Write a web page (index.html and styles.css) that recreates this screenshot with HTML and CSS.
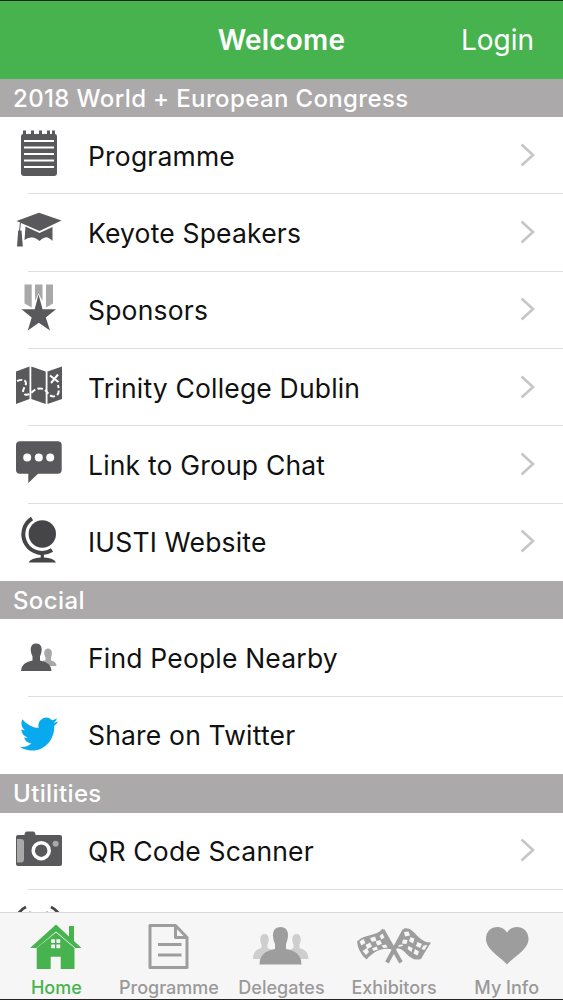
FILE: index.html
```
<!DOCTYPE html>
<html lang="en">
<head>
<meta charset="UTF-8">
<meta name="viewport" content="width=device-width, initial-scale=1.0">
<title>Welcome</title>
<link rel="stylesheet" href="styles.css">
</head>
<body>
  <div class="app">
    <div class="header">
      <h1>Welcome</h1>
      <a class="login">Login</a>
    </div>
    <div class="content">
      <h2>2018 World + European Congress</h2>
      <div class="item">
        <svg class="icon" viewBox="0 0 48 52">
          <path d="M8 4V0.500h3V4h5V0.500h3V4h5V0.500h3V4h5V0.500h3V4h2V0.500h3V4Q42 4 42 7V43Q42 46 39 46H9Q6 46 6 43V7Q6 4 8 4z"/>
          <path class="line" d="M9 11H39M9 17.500H39M9 24H39M9 30.500H39M9 37H39"/>
        </svg>
        <span class="name">Programme</span>
        <svg class="chevron" viewBox="0 0 15 24"><path d="M1.500 1.500L13 12L1.500 22.500"/></svg>
      </div>
      <div class="item">
        <svg class="icon" viewBox="0 0 48 52">
          <path d="M1.500 14L24 5.800L46.500 13.500L24.500 24z"/>
          <path d="M10.500 19.500L24.500 26L37.500 20V34Q33 29.500 30 30.500Q27 31 24.500 34Q20 30 17 30.500Q13 30 9.500 33z"/>
          <path class="thin" d="M5.500 15.500L4.500 24"/>
          <path d="M3.200 23.500H6.500L7.800 39.500H2z"/>
        </svg>
        <span class="name">Keyote Speakers</span>
        <svg class="chevron" viewBox="0 0 15 24"><path d="M1.500 1.500L13 12L1.500 22.500"/></svg>
      </div>
      <div class="item">
        <svg class="icon" viewBox="0 0 48 52">
          <path class="light" d="M9.500 0.500H16.700V23.500L9.500 19.500zM20 0.500H27.500V17L23.500 9.500L20 17zM31 0.500H38V19.500L31 23.500z"/>
          <path d="M23.500 10.500L27.600 25.300H41L30.800 33.600L35 46.500L23.800 38.800L12.800 46.500L16.700 33.600L6.500 25.300H19.700z"/>
        </svg>
        <span class="name">Sponsors</span>
        <svg class="chevron" viewBox="0 0 15 24"><path d="M1.500 1.500L13 12L1.500 22.500"/></svg>
      </div>
      <div class="item">
        <svg class="icon" viewBox="0 0 48 52">
          <path d="M1 9.500L14.500 4.500V37L1 42zM16.300 4.500L30.700 9.500V42L16.300 37zM32.500 9.500L47 4.500V37L32.500 42z"/>
          <path class="route" d="M2 19Q10 16 11 21C11 25 5 29 10 32.500C17 34 17 26.500 25 26.500C33 26.500 32 34 38 34.500Q46 34 43 23"/>
          <path class="cross" d="M35 13.500L43.500 20M43 12.500L36 21"/>
        </svg>
        <span class="name">Trinity College Dublin</span>
        <svg class="chevron" viewBox="0 0 15 24"><path d="M1.500 1.500L13 12L1.500 22.500"/></svg>
      </div>
      <div class="item">
        <svg class="icon" viewBox="0 0 48 52">
          <path d="M5 2.200H42.700Q46.700 2.200 46.700 6.200V30.700Q46.700 34.700 42.700 34.700H23L13.300 44V34.700H5Q1 34.700 1 30.700V6.200Q1 2.200 5 2.200z"/>
          <g class="white"><circle cx="12.200" cy="18.600" r="4"/><circle cx="23.800" cy="18.600" r="4"/><circle cx="35.200" cy="18.600" r="4"/></g>
        </svg>
        <span class="name">Link to Group Chat</span>
        <svg class="chevron" viewBox="0 0 15 24"><path d="M1.500 1.500L13 12L1.500 22.500"/></svg>
      </div>
      <div class="item">
        <svg class="icon globe" viewBox="0 0 48 52">
          <circle cx="27.300" cy="18" r="13.700"/>
          <path class="ring" d="M17 2.500A18.500 18.500 0 0 0 37 34"/>
          <path d="M25.700 36H28.900V41.500Q39 42 41 46.500H13.500Q16 42 25.700 41.500z"/>
        </svg>
        <span class="name">IUSTI Website</span>
        <svg class="chevron" viewBox="0 0 15 24"><path d="M1.500 1.500L13 12L1.500 22.500"/></svg>
      </div>

      <h2>Social</h2>
      <div class="item">
        <svg class="icon" viewBox="0 0 48 52">
          <path class="light" d="M33 16.500C37.500 16.500 37.500 22 36 25.500V28.500Q41.500 29.500 41.500 34H28V28.500H30.500V25.500C28.500 22 28.500 16.500 33 16.500z"/>
          <path d="M21 11.500C28 11.500 27.500 19 25 24.500V28.500Q36.500 30.500 36.500 39H6Q6 30.500 17.500 28.500V24.500C15 19 14.500 11.500 21 11.500z"/>
        </svg>
        <span class="name">Find People Nearby</span>
      </div>
      <div class="item">
        <svg class="icon" viewBox="0 0 48 52">
          <path class="twitter" transform="translate(4.800 4.800) scale(1.600 1.690)" d="M23.953 4.570a10 10 0 01-2.825.775 4.958 4.958 0 002.163-2.723c-.951.555-2.005.959-3.127 1.184a4.920 4.920 0 00-8.384 4.482C7.690 8.095 4.067 6.130 1.640 3.162a4.822 4.822 0 00-.666 2.475c0 1.710.870 3.213 2.188 4.096a4.904 4.904 0 01-2.228-.616v.060a4.923 4.923 0 003.946 4.827 4.996 4.996 0 01-2.212.085 4.936 4.936 0 004.604 3.417 9.867 9.867 0 01-6.102 2.105c-.390 0-.779-.023-1.170-.067a13.995 13.995 0 007.557 2.209c9.053 0 13.998-7.496 13.998-13.985 0-.210 0-.420-.015-.630A9.935 9.935 0 0024 4.590z"/>
        </svg>
        <span class="name">Share on Twitter</span>
      </div>

      <h2>Utilities</h2>
      <div class="item">
        <svg class="icon" viewBox="0 0 48 52">
          <path d="M3 10H9.500Q9.500 6.500 12 6.500H18Q20.500 6.500 20.500 10H45Q47 10 47 12V39Q47 41 45 41H3Q1 41 1 39V12Q1 10 3 10z"/>
          <path class="light" d="M2 14H6Q9 14 9 17V34Q9 37.500 6 37.500H2z"/>
          <circle class="lens" cx="26.200" cy="25.700" r="8"/>
          <circle class="light" cx="40.600" cy="18.700" r="3"/>
        </svg>
        <span class="name">QR Code Scanner</span>
        <svg class="chevron" viewBox="0 0 15 24"><path d="M1.500 1.500L13 12L1.500 22.500"/></svg>
      </div>
      <div class="item">
        <svg class="icon" viewBox="0 0 48 52">
          <path class="wave" d="M11 4Q3.500 7.500 1 16M36 4Q43.500 7.500 46 16M16 9.500Q11 13 9 20M31 9.500Q36 13 38 20"/>
        </svg>
      </div>
    </div>

    <div class="tabs">
      <div class="tab active">
        <svg viewBox="0 0 80 50">
          <path d="M53 4H58V20L53 16zM40 2.500L65.500 26H59.500L40 9.500L20.500 26H14z"/>
          <path d="M40 10.500L58.500 26V47H44.700V34.700H34.700V47H20.700V26z"/>
          <path class="pane" d="M35.200 17.200h3.800v3.800h-3.800zM40.400 17.200h3.800v3.800h-3.800zM35.200 22.400h3.800v3.800h-3.800zM40.400 22.400h3.800v3.800h-3.800z"/>
        </svg>
        <span>Home</span>
      </div>
      <div class="tab">
        <svg viewBox="0 0 80 50">
          <path class="doc" d="M46.500 3.500H21V45.500H58V15.500L46.500 3.500V15.500H58M29 22.500H52.500M29 33H52.500"/>
        </svg>
        <span>Programme</span>
      </div>
      <div class="tab">
        <svg viewBox="0 0 80 50">
          <path class="pale" d="M23.500 12C28.500 12 28.500 19 26.500 22.500V26Q34 28 34 37H12Q12 28 20.500 26V22.500C18.500 19 18.500 12 23.500 12zM55.500 12C60.500 12 60.500 19 58.500 22.500V26Q67.500 28 67.500 37H45Q45 28 52.500 26V22.500C50.500 19 50.500 12 55.500 12z"/>
          <path d="M39.500 5C48 5 48.500 14 45 22V27Q60.500 29.500 60.500 42.500H18.500Q18.500 29.500 34 27V22C30.500 14 31 5 39.500 5z"/>
        </svg>
        <span>Delegates</span>
      </div>
      <div class="tab">
        <svg viewBox="0 0 80 50">
          <path class="pole" d="M28.500 8L47 40.500M50.500 8L33 40.500"/>
          <path d="M28.500 6.500L38 27.500C29 25 20 29 12.500 37.500Q4 30 3 19.500C12 11 22 15 28.500 6.500z"/>
          <path d="M50 6.500C60 4 64 21 77 20.500Q72 28 67 37C54 41 51 24 41.500 26.500z"/>
          <path class="check" d="M5.500 19.500l4-2.500 2 4-4 2.500zM16 16l5-1.500 1.500 4-4.500 1.500zM11.500 23l4.500-2.500 2 4-4.500 2.500zM21.500 19.500l4.500-1.500 2 4-4.500 1.500zM8.500 29l4.500-3 2 4-3 3zM18 26.500l4.500-2 1.500 3-4.500 1.500zM27.500 23.500l4.500-1 1.500 3-4 .500zM25.500 14l3-2.500 2 4-3 2zM50 10l4.500-.500 1.500 4-5 1zM56.500 15l4 1.500-1.500 5-4-2.500zM49 17.500l4.500.500-1 4-4.500-.500zM63.500 20l4.500 2-2 4-4-2zM54.500 24l4 2-1 4-4-3zM61 27l4 2.500-1.500 4-4-2zM69.500 23.500l4-.500-3 5-3-1zM45 23l4-.500-.500 1.500-4 1z"/>
        </svg>
        <span>Exhibitors</span>
      </div>
      <div class="tab">
        <svg viewBox="0 0 80 50">
          <path d="M40 42.500C35 36 19 28 19 17C19 4 34 1 40 10.500C46 1 61.500 4 61.500 17C61.500 28 45 36 40 42.500z"/>
        </svg>
        <span>My Info</span>
      </div>
    </div>
  </div>
</body>
</html>
```
FILE: styles.css
```
* {
  box-sizing: border-box;
}

body {
  margin: 0;
  font-family: Inter, "Liberation Sans", sans-serif;
  background-color: #fff;
  color: #111;
}

.app {
  display: flex;
  flex-direction: column;
  height: 1000px;
  border-top: 1px solid #10240f;
  border-bottom: 1px solid #222;
  overflow: hidden;
}

.header {
  display: grid;
  grid-template-columns: 1fr auto 1fr;
  align-items: center;
  flex: none;
  height: 77.500px;
  padding-right: 29px;
  padding-left: 29px;
  background-color: #47b34f;
  color: #fff;
}

.header h1 {
  grid-column: 2;
  margin: 0;
  font-size: 28px;
  font-weight: 600;
  letter-spacing: 0.200px;
}

.login {
  justify-self: end;
  font-size: 28px;
}

.content {
  flex: 1;
  min-height: 0;
  overflow: hidden;
}

h2 {
  height: 38.600px;
  margin: 0;
  padding-left: 13px;
  background-color: #aba9aa;
  color: #fff;
  font-size: 24px;
  font-weight: 550;
  letter-spacing: 0.370px;
  line-height: 39px;
}

.item {
  display: flex;
  align-items: center;
  height: 77.300px;
  padding: 0 28px 0 15px;
  /* divider starts past the left edge */
  background: linear-gradient(#dedede, #dedede) 28px 100% / 100% 1px no-repeat;
}

.item:has(+ h2) {
  background: none;
}

.icon {
  flex: none;
  width: 48px;
  height: 52px;
  fill: #59585a;
}

.name {
  flex: 1;
  margin-left: 25px;
  font-size: 26.500px;
  letter-spacing: 0.180px;
  white-space: nowrap;
}

.chevron {
  width: 15px;
  height: 24px;
  margin-top: -2px;
  fill: none;
  stroke: #c6c6c8;
  stroke-width: 2.600;
}

.light {
  fill: #a9a8a9;
}

.white {
  fill: #fff;
}

.twitter {
  fill: #08a9ee;
}

.globe {
  fill: #454446;
}

.line {
  stroke: #fff;
  stroke-width: 2;
}

.thin {
  stroke: #59585a;
  stroke-width: 1;
}

.route,
.cross,
.lens {
  fill: none;
  stroke: #fff;
  stroke-width: 2;
}

.route {
  stroke-dasharray: 5 2.500;
}

.lens {
  stroke-width: 3.500;
}

.ring,
.wave {
  fill: none;
  stroke: #454446;
  stroke-width: 4;
}

.wave {
  stroke-width: 3;
}

.tabs {
  display: grid;
  grid-template-columns: repeat(5, 1fr);
  flex: none;
  height: 87px;
  border-top: 1px solid #d9d7d8;
  background-color: #f7f6f6;
  color: #9a999a;
}

.tab {
  display: flex;
  flex-direction: column;
  align-items: center;
  padding-top: 9px;
  font-size: 18px;
  font-weight: 500;
}

.tab svg {
  flex: none;
  width: 80px;
  height: 50px;
  fill: #9e9d9e;
}

.tab span {
  margin-top: 5px;
  line-height: 22px;
}

.active {
  color: #47b34f;
}

.active svg {
  fill: #47b34f;
}

.tab .pane,
.tab .check {
  fill: #f7f6f6;
}

.tab .pale {
  fill: #cfcece;
}

.tab .doc {
  fill: none;
  stroke: #9e9d9e;
  stroke-width: 3;
  stroke-linejoin: round;
}

.pole {
  stroke: #9e9d9e;
  stroke-width: 4;
}
```
